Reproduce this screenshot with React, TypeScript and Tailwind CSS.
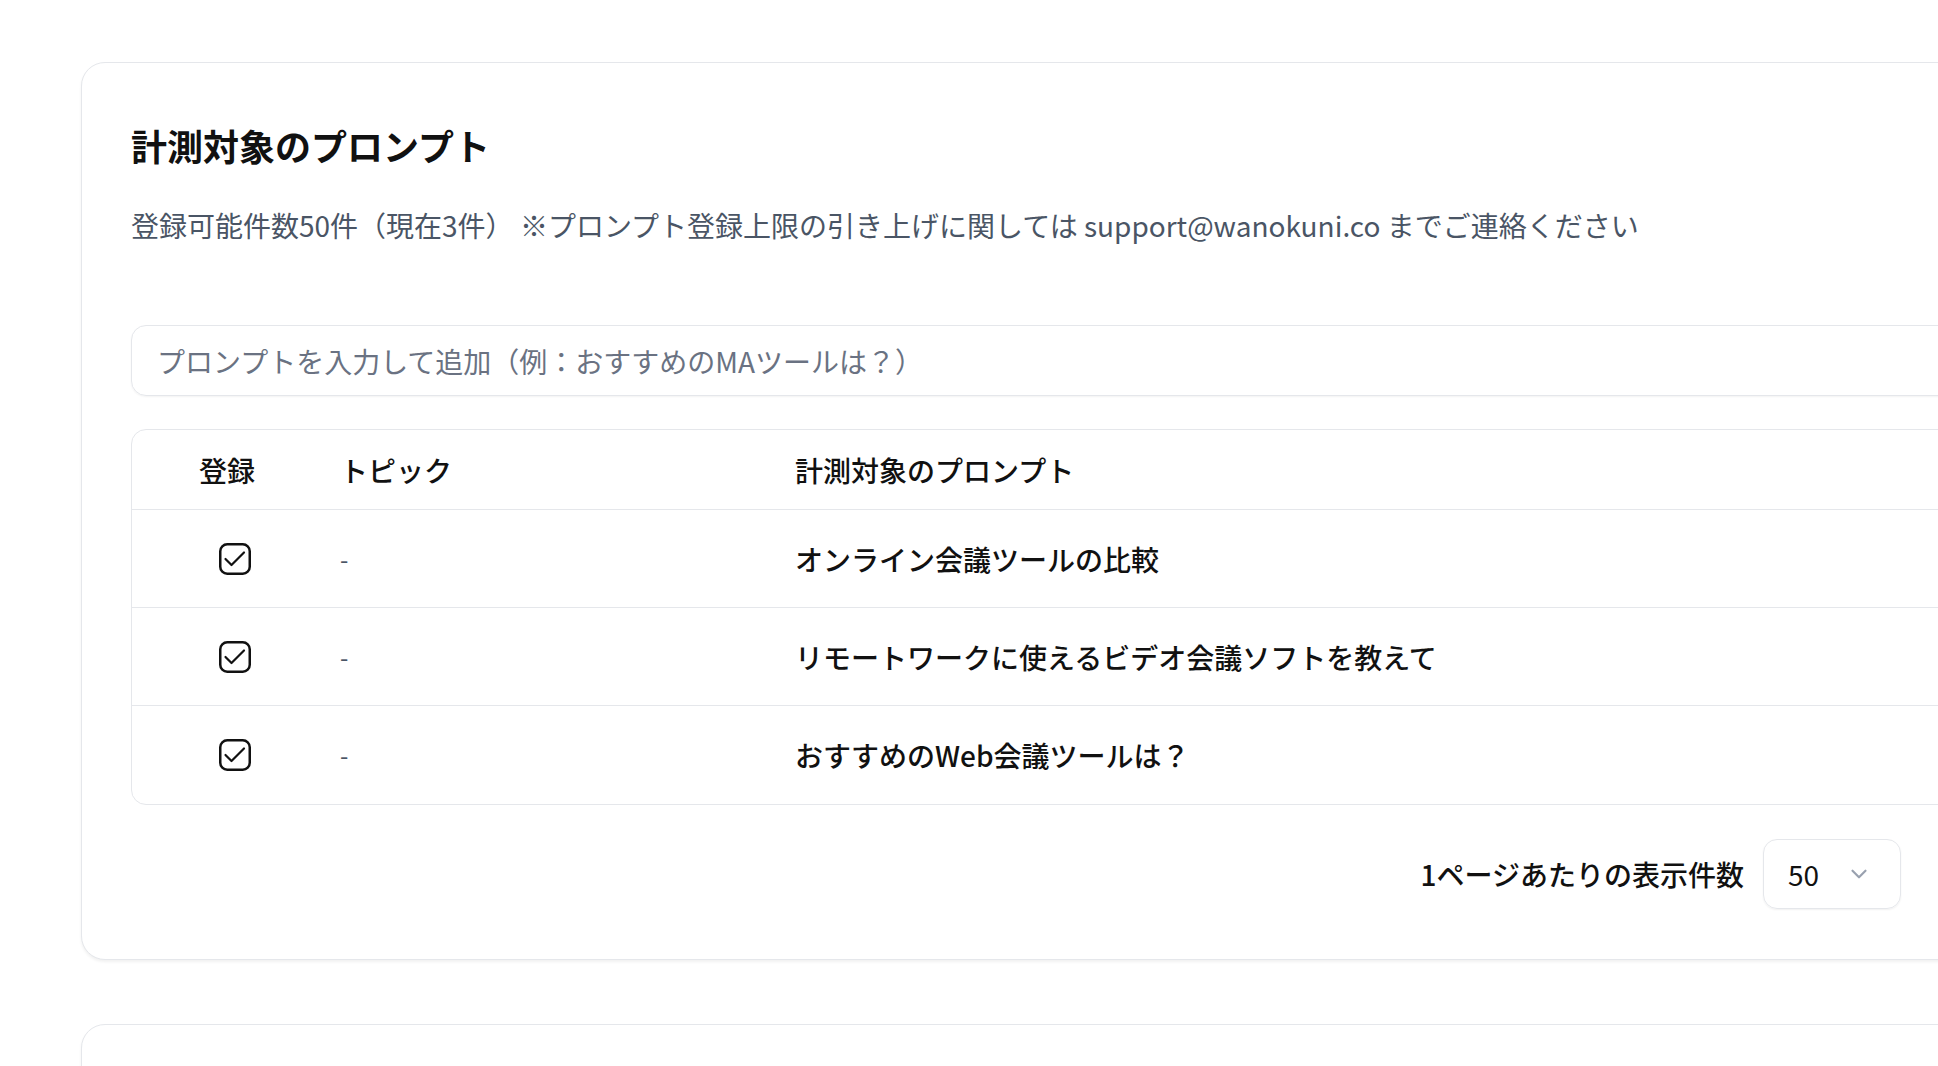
import { ChevronDown, ChevronLeft, ChevronRight } from 'lucide-react';

interface PromptRow {
  id: number;
  topic: string;
  prompt: string;
  enabled: boolean;
}

const rows: PromptRow[] = [
  { id: 1, topic: '-', prompt: 'オンライン会議ツールの比較', enabled: true },
  { id: 2, topic: '-', prompt: 'リモートワークに使えるビデオ会議ソフトを教えて', enabled: true },
  { id: 3, topic: '-', prompt: 'おすすめのWeb会議ツールは？', enabled: true },
];

function CheckIcon() {
  return (
    <svg width="32" height="32" viewBox="0 0 32 32" fill="none" stroke="#111" strokeLinecap="round" strokeLinejoin="round">
      <rect x="1.25" y="1.25" width="29.5" height="29.5" rx="7" strokeWidth="2.5" />
      <polyline points="6.5,16 12.5,22 25,9.5" strokeWidth="2.2" />
    </svg>
  );
}

export default function App() {
  return (
    <div className="h-[1066px] w-full overflow-hidden bg-white font-['Noto_Sans_CJK_JP','Noto_Sans',sans-serif] text-[#111]">
      <div className="flex w-[2100px] flex-col gap-[64px] pl-[81px] pt-[62px]">
        <section className="rounded-[24px] border border-gray-200 bg-white px-[49px] pb-[50px] pt-[58px] shadow-[0_2px_3px_rgba(0,0,0,0.06)]">
          <h1 className="text-[36px] font-bold leading-[48px]">計測対象のプロンプト</h1>
          <p className="mt-[36px] text-[28px] leading-[40px] text-gray-600">
            登録可能件数50件（現在3件） ※プロンプト登録上限の引き上げに関しては support@wanokuni.co までご連絡ください
          </p>

          <div className="mt-[80px] flex h-[71px] items-center rounded-[15px] border border-gray-200 px-[25px] shadow-[0_1px_2px_rgba(0,0,0,0.05)]">
            <input
              className="w-full bg-transparent text-[28px] text-[#111] outline-none placeholder:text-gray-500"
              placeholder="プロンプトを入力して追加（例：おすすめのMAツールは？）"
            />
          </div>

          <div className="mt-[33px] overflow-hidden rounded-[15px] border border-gray-200">
            <div className="grid h-[80px] grid-cols-[208px_455px_1fr] items-center border-b border-gray-200 text-[28px] font-medium">
              <div className="pl-[67px]">登録</div>
              <div>トピック</div>
              <div>計測対象のプロンプト</div>
            </div>
            {rows.map((row, i) => (
              <div
                key={row.id}
                className={`grid h-[98px] grid-cols-[208px_455px_1fr] items-center text-[28px] ${
                  i < rows.length - 1 ? 'border-b border-gray-200' : ''
                }`}
              >
                <div className="pl-[87px]">{row.enabled && <CheckIcon />}</div>
                <div className="text-[24px] text-gray-600">{row.topic}</div>
                <div className="font-medium">{row.prompt}</div>
              </div>
            ))}
          </div>

          <div className="mt-[34px] flex items-center justify-end gap-[19px]">
            <span className="text-[28px] font-medium">1ページあたりの表示件数</span>
            <div className="flex h-[70px] w-[138px] items-center justify-between rounded-[14px] border border-gray-200 pl-[24px] pr-[28px] shadow-[0_1px_2px_rgba(0,0,0,0.06)]">
              <span className="text-[28px]">50</span>
              <ChevronDown className="h-[26px] w-[26px] text-gray-400" strokeWidth={2} />
            </div>
            <div className="ml-[50px] flex w-[80px] items-center gap-4">
              <ChevronLeft className="h-7 w-7 text-gray-400" />
              <ChevronRight className="h-7 w-7 text-gray-400" />
            </div>
          </div>
        </section>

        <section className="h-[400px] rounded-[24px] border border-gray-200 bg-white shadow-[0_2px_3px_rgba(0,0,0,0.06)]" />
      </div>
    </div>
  );
}
